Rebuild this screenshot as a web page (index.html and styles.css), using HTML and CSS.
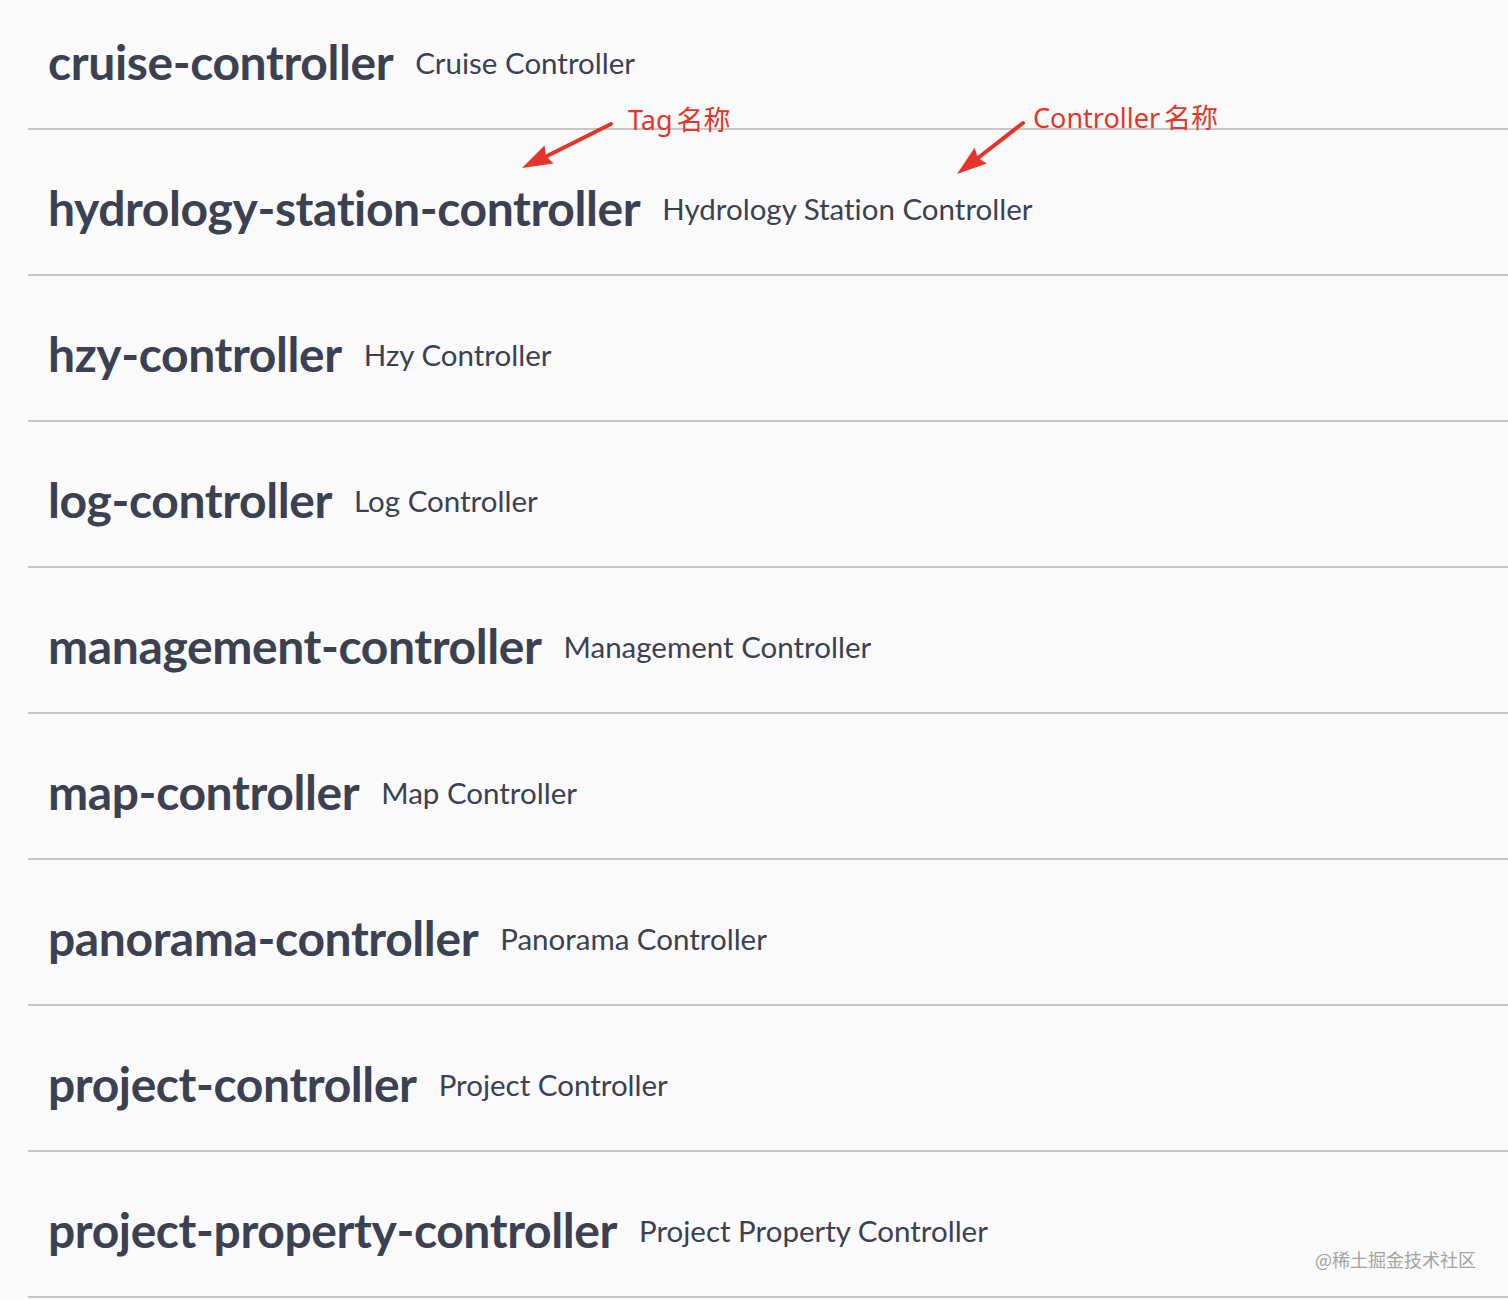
FILE: index.html
```html
<!DOCTYPE html>
<html lang="en">
<head>
    <meta charset="UTF-8">
    <meta name="viewport" content="width=device-width, initial-scale=1.0">
    <title>Swagger Tags</title>
    <link rel="stylesheet" href="styles.css">
</head>
<body>
    <div class="page">
        <div class="tag-list">
            <h4 class="tag-row"><span class="tag-name">cruise-controller</span><small class="tag-desc">Cruise Controller</small></h4>
            <h4 class="tag-row"><span class="tag-name">hydrology-station-controller</span><small class="tag-desc">Hydrology Station Controller</small></h4>
            <h4 class="tag-row"><span class="tag-name">hzy-controller</span><small class="tag-desc">Hzy Controller</small></h4>
            <h4 class="tag-row"><span class="tag-name">log-controller</span><small class="tag-desc">Log Controller</small></h4>
            <h4 class="tag-row"><span class="tag-name">management-controller</span><small class="tag-desc">Management Controller</small></h4>
            <h4 class="tag-row"><span class="tag-name">map-controller</span><small class="tag-desc">Map Controller</small></h4>
            <h4 class="tag-row"><span class="tag-name">panorama-controller</span><small class="tag-desc">Panorama Controller</small></h4>
            <h4 class="tag-row"><span class="tag-name">project-controller</span><small class="tag-desc">Project Controller</small></h4>
            <h4 class="tag-row"><span class="tag-name">project-property-controller</span><small class="tag-desc">Project Property Controller</small></h4>
        </div>

        <!-- annotations drawn over the screenshot -->
        <svg class="arrows" width="1508" height="1300" viewBox="0 0 1508 1300">
            <line x1="611" y1="124" x2="547" y2="156" stroke="#e5352b" stroke-width="4" stroke-linecap="round"/>
            <polygon points="522,168 553.5,163.6 546,156 544.5,145.6" fill="#e5352b"/>
            <line x1="1023" y1="123" x2="978" y2="158" stroke="#e5352b" stroke-width="4" stroke-linecap="round"/>
            <polygon points="957,174 986.8,163.6 978,158 974.6,147.8" fill="#e5352b"/>
        </svg>
        <span class="note note-tag">Tag<span class="cjk">名称</span></span>
        <span class="note note-ctrl">Controller<span class="cjk">名称</span></span>
        <span class="watermark">@稀土掘金技术社区</span>
    </div>
</body>
</html>
```

FILE: styles.css
```css
*{
    box-sizing: border-box;
}
body{
    margin: 0;
    background-color: #fafafa;
    color: #3b4151;
}
.page{
    position: relative;
    width: 1508px;
    height: 1300px;
    overflow: hidden;
}
.tag-list{
    margin-top: -16px;
    padding-left: 28px;
}
.tag-row{
    display: flex;
    align-items: center;
    height: 146px;
    margin: 0;
    padding: 12px 40px 0 20px;
    border-bottom: 2px solid #c6c7ca;
    font-variant-ligatures: none;
}
.tag-name{
    font-family: Lato, "Open Sans", sans-serif;
    font-weight: 700;
    font-size: 48px;
    letter-spacing: -0.4px;
    line-height: 1;
}
.tag-desc{
    font-family: Lato, "Open Sans", sans-serif;
    font-weight: 400;
    font-size: 29.5px;
    padding: 0 0 0 22px;
}
.arrows{
    position: absolute;
    left: 0;
    top: 0;
    pointer-events: none;
}
.note{
    position: absolute;
    font-family: "Noto Sans", "Noto Sans CJK SC", sans-serif;
    font-size: 27px;
    color: #e5352b;
    line-height: 1;
}
.cjk{
    margin-left: 4px;
}
.note-tag{
    left: 628px;
    top: 106px;
}
.note-ctrl{
    left: 1033px;
    top: 104px;
}
.watermark{
    position: absolute;
    left: 1315px;
    top: 1246px;
    font-family: "Noto Sans CJK SC", sans-serif;
    font-size: 18px;
    color: #a3a3a3;
}
```
